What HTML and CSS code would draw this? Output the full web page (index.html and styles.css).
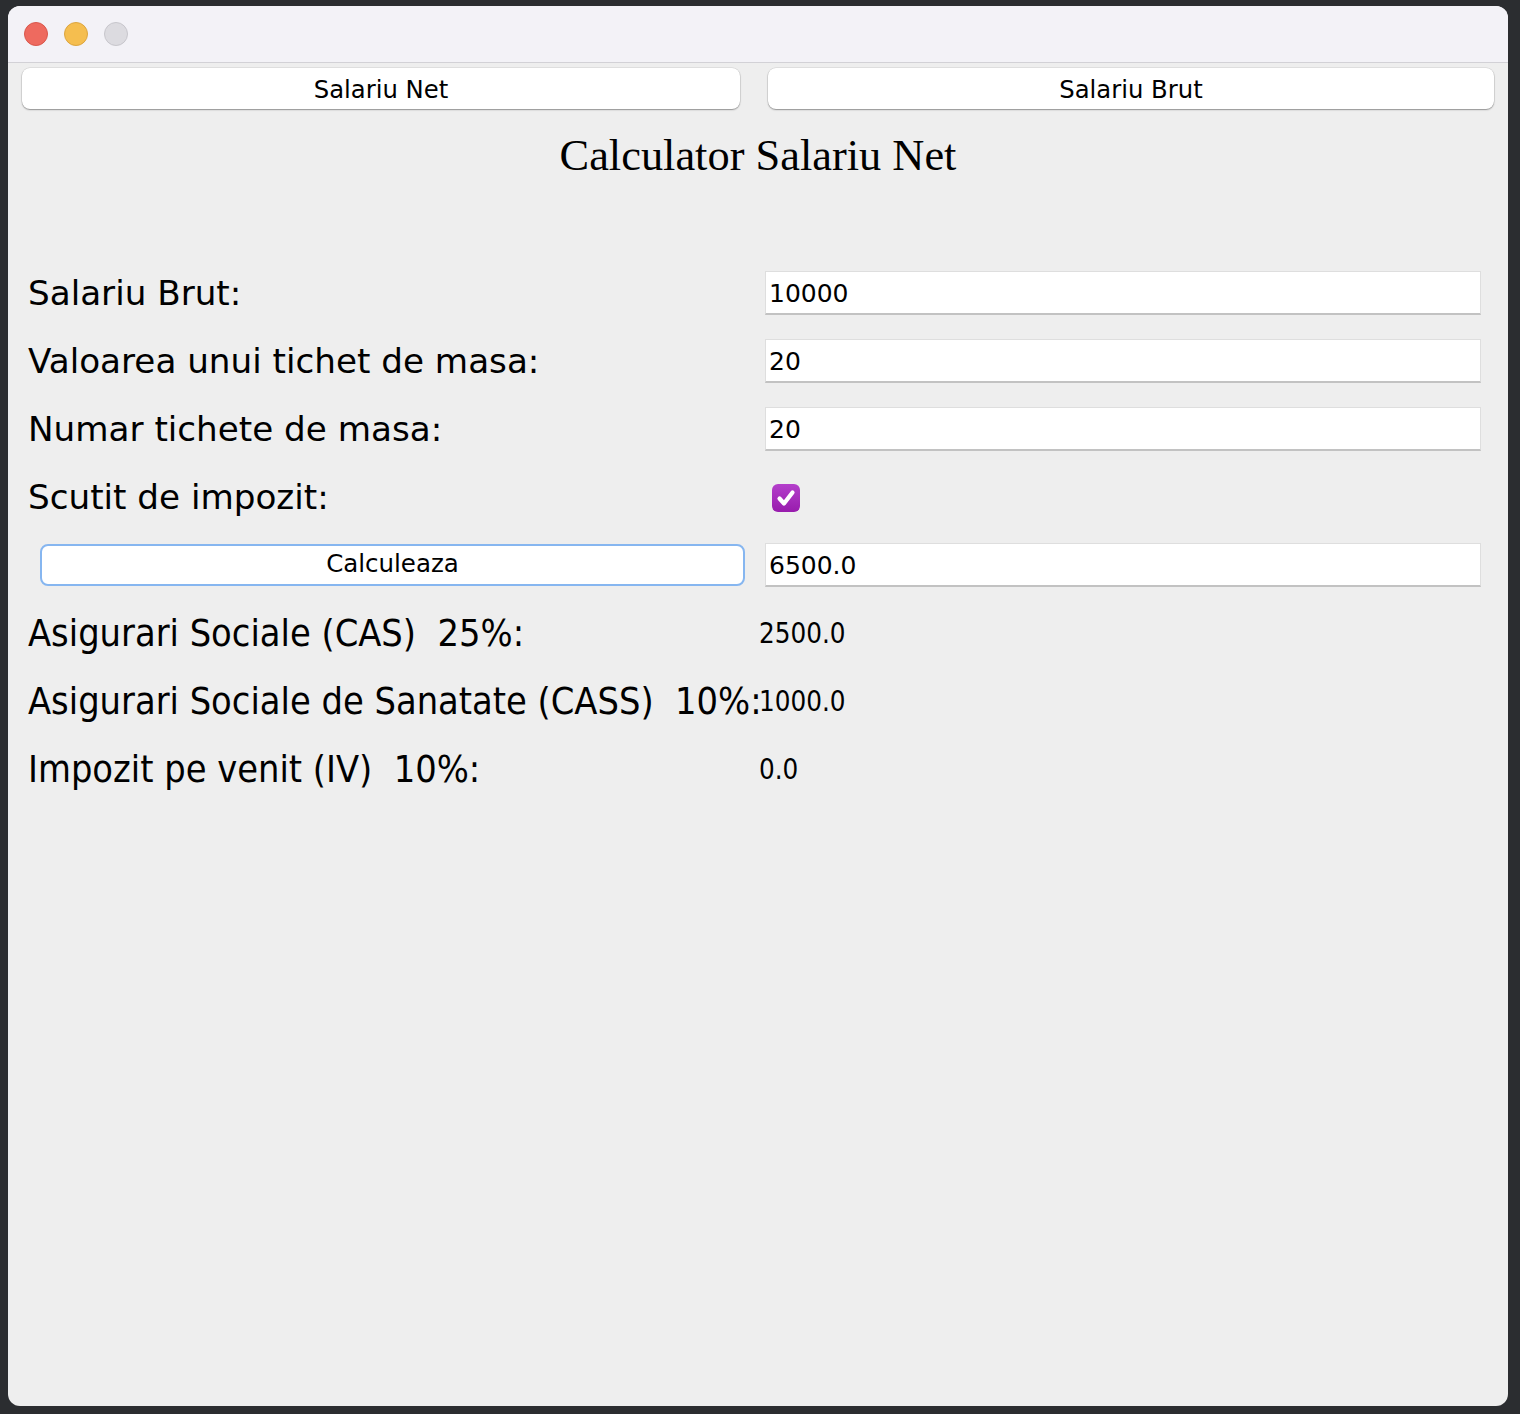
FILE: index.html
```html
<!DOCTYPE html>
<html lang="ro">
<head>
<meta charset="utf-8">
<title>Calculator Salariu Net</title>
<link rel="stylesheet" href="styles.css">
</head>
<body>
<div class="window">
  <div class="titlebar">
    <span class="light light-red"></span>
    <span class="light light-yellow"></span>
    <span class="light light-gray"></span>
  </div>
  <div class="content">
    <div class="tabs">
      <div class="tab tab-left">Salariu Net</div>
      <div class="tab tab-right">Salariu Brut</div>
    </div>
    <h1 class="title">Calculator Salariu Net</h1>
    <div class="form">
      <div class="cell"><span class="label">Salariu Brut:</span></div>
      <div class="cell"><div class="field">10000</div></div>

      <div class="cell"><span class="label">Valoarea unui tichet de masa:</span></div>
      <div class="cell"><div class="field">20</div></div>

      <div class="cell"><span class="label">Numar tichete de masa:</span></div>
      <div class="cell"><div class="field">20</div></div>

      <div class="cell"><span class="label">Scutit de impozit:</span></div>
      <div class="cell">
        <span class="checkbox">
          <svg width="28" height="28" viewBox="0 0 28 28"><polyline points="7.5,14.5 12,19.5 20.5,8.5" fill="none" stroke="#fff" stroke-width="4.2" stroke-linecap="round" stroke-linejoin="round"/></svg>
        </span>
      </div>

      <div class="cell"><div class="button">Calculeaza</div></div>
      <div class="cell"><div class="field">6500.0</div></div>

      <div class="cell"><span class="label label-narrow">Asigurari Sociale (CAS)  25%:</span></div>
      <div class="cell"><span class="value">2500.0</span></div>

      <div class="cell"><span class="label label-narrow">Asigurari Sociale de Sanatate (CASS)  10%:</span></div>
      <div class="cell"><span class="value">1000.0</span></div>

      <div class="cell"><span class="label label-narrow">Impozit pe venit (IV)  10%:</span></div>
      <div class="cell"><span class="value">0.0</span></div>
    </div>
  </div>
</div>
</body>
</html>
```

FILE: styles.css
```css
html, body {
  margin: 0;
  padding: 0;
}
body {
  background: #2b2d30;
  width: 1520px;
  height: 1414px;
  padding: 6px 12px 8px 8px;
  box-sizing: border-box;
  font-family: "DejaVu Sans", "Liberation Sans", sans-serif;
  color: #000;
}
.window {
  width: 1500px;
  height: 1400px;
  border-radius: 12px;
  overflow: hidden;
  background: #eeeeee;
  display: flex;
  flex-direction: column;
}
.titlebar {
  height: 56px;
  background: #f3f2f7;
  border-bottom: 1px solid #d2d1d6;
  display: flex;
  align-items: center;
  padding-left: 16px;
  gap: 16px;
  flex: none;
}
.light {
  width: 24px;
  height: 24px;
  border-radius: 50%;
  box-sizing: border-box;
}
.light-red { background: #ee6a5f; border: 1px solid #d9574c; }
.light-yellow { background: #f5be4f; border: 1px solid #dca53f; }
.light-gray { background: #dcdbe0; border: 1px solid #c7c6cc; }

.content {
  flex: 1;
  padding: 5px 14px 0 14px;
}
.tabs {
  display: grid;
  grid-template-columns: 718px 726px;
  column-gap: 28px;
}
.tab {
  height: 41px;
  background: #fff;
  border-radius: 8px;
  box-shadow: 0 0 0 0.5px rgba(0,0,0,0.12), 0 1px 1.5px rgba(0,0,0,0.35);
  display: flex;
  align-items: center;
  justify-content: center;
  font-size: 24.3px;
  box-sizing: border-box;
  padding-top: 1px;
}
.title {
  margin: 21px 0 0 0;
  height: 129px;
  text-align: center;
  font-family: "Liberation Serif", "Times New Roman", serif;
  font-weight: normal;
  font-size: 44.4px;
  line-height: 50px;
}
.form {
  display: grid;
  grid-template-columns: 735px 735px;
  column-gap: 2px;
  grid-auto-rows: 68px;
}
.cell {
  display: flex;
  align-items: center;
  min-width: 0;
}
.label {
  padding-left: 6px;
  font-size: 34.2px;
  white-space: pre;
}
.label-narrow {
  font-family: "DejaVu Sans Condensed", "DejaVu Sans", sans-serif;
  font-stretch: condensed;
  font-size: 37.6px;
}
.field {
  margin-left: 6px;
  width: 716px;
  height: 44px;
  background: #fff;
  border: 1px solid #dedede;
  border-bottom: 2px solid #c2c2c2;
  box-sizing: border-box;
  padding-left: 3px;
  display: flex;
  align-items: center;
  font-size: 25px;
  padding-top: 1px;
}
.checkbox {
  margin-left: 13px;
  width: 28px;
  height: 28px;
  border-radius: 6px;
  background: linear-gradient(#b43fcb, #981cad);
  display: block;
  margin-top: 1px;
}
.checkbox svg { display: block; }
.button {
  margin-left: 18px;
  width: 705px;
  height: 42px;
  background: #fff;
  border: 2px solid #86b6f0;
  border-radius: 8px;
  box-sizing: border-box;
  display: flex;
  align-items: center;
  justify-content: center;
  font-size: 24.5px;
  padding-bottom: 2px;
  margin-top: -1px;
}
.value {
  font-family: "DejaVu Sans Condensed", "DejaVu Sans", sans-serif;
  font-stretch: condensed;
  font-size: 27.5px;
}
```
